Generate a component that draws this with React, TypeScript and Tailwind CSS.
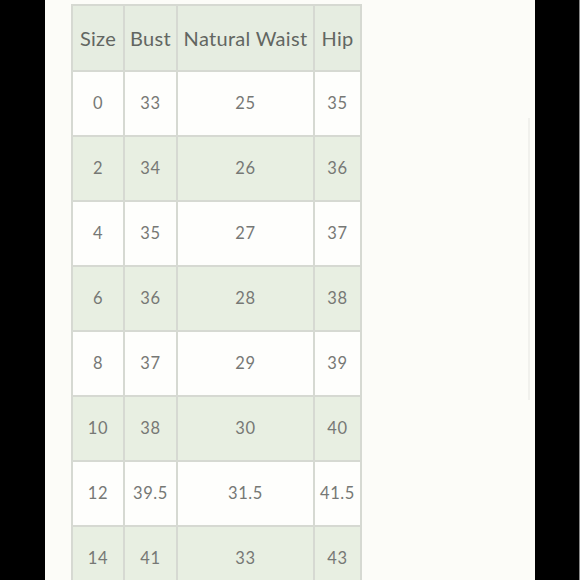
const rows: [string, string, string, string][] = [
  ['0', '33', '25', '35'],
  ['2', '34', '26', '36'],
  ['4', '35', '27', '37'],
  ['6', '36', '28', '38'],
  ['8', '37', '29', '39'],
  ['10', '38', '30', '40'],
  ['12', '39.5', '31.5', '41.5'],
  ['14', '41', '33', '43'],
];

const cell = 'border-2 border-[#d6d9d2] text-center align-middle p-0';

export default function App() {
  return (
    <div className="flex h-[580px] w-[580px] overflow-hidden bg-black font-['Lato',sans-serif]">
      <div className="w-[45px] shrink-0 bg-black" />
      <div className="relative w-[490px] shrink-0 overflow-hidden bg-[#fcfcf8] pl-[26px] pt-[4px]">
        <table className="border-collapse">
          <colgroup>
            <col className="w-[52px]" />
            <col className="w-[53px]" />
            <col className="w-[137px]" />
            <col className="w-[47px]" />
          </colgroup>
          <thead>
            <tr className="h-[66px] bg-[#e6ede1] text-[20px] tracking-[0.3px] text-[#626661]">
              <th className={`${cell} font-normal`}>Size</th>
              <th className={`${cell} font-normal`}>Bust</th>
              <th className={`${cell} font-normal`}>Natural Waist</th>
              <th className={`${cell} font-normal`}>Hip</th>
            </tr>
          </thead>
          <tbody>
            {rows.map((r, i) => (
              <tr
                key={r[0]}
                className={`h-[65px] text-[16.5px] tracking-[0.6px] text-[#767875] ${i % 2 === 1 ? 'bg-[#e8efe2]' : 'bg-[#fefefc]'}`}
              >
                {r.map((v, j) => (
                  <td key={j} className={cell}>
                    {v}
                  </td>
                ))}
              </tr>
            ))}
          </tbody>
        </table>
        {/* faint scroll track */}
        <div className="absolute left-[483px] top-[118px] h-[282px] w-[2px] bg-[#f1f1ed]" />
      </div>
      <div className="w-[44px] shrink-0 bg-black" />
      <div className="w-px shrink-0 bg-[#8a8a8a]" />
    </div>
  );
}
